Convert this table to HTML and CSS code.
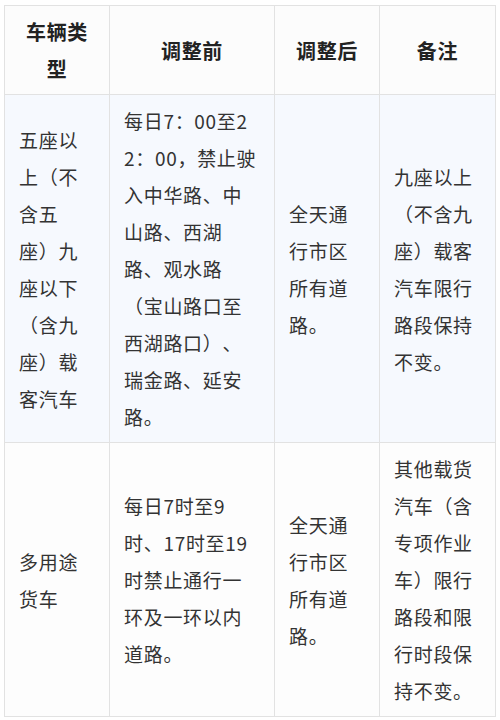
FILE: index.html
```html
<!DOCTYPE html>
<html lang="zh">
<head>
<meta charset="utf-8">
<link rel="stylesheet" href="styles.css">
</head>
<body>
<table class="rules">
  <colgroup>
    <col class="c1"><col class="c2"><col class="c3"><col class="c4">
  </colgroup>
  <thead>
    <tr class="head">
      <th>车辆类型</th>
      <th>调整前</th>
      <th>调整后</th>
      <th>备注</th>
    </tr>
  </thead>
  <tbody>
    <tr class="row-a">
      <td>五座以上（不含五座）九座以下（含九座）载客汽车</td>
      <td>每日7：00至22：00，禁止驶入中华路、中山路、西湖路、观水路（宝山路口至西湖路口）、瑞金路、延安路。</td>
      <td>全天通行市区所有道路。</td>
      <td>九座以上（不含九座）载客汽车限行路段保持不变。</td>
    </tr>
    <tr class="row-b">
      <td>多用途货车</td>
      <td>每日7时至9时、17时至19时禁止通行一环及一环以内道路。</td>
      <td>全天通行市区所有道路。</td>
      <td>其他载货汽车（含专项作业车）限行路段和限行时段保持不变。</td>
    </tr>
  </tbody>
</table>
</body>
</html>
```
FILE: styles.css
```css
html, body {
  margin: 0;
  padding: 0;
  background: #ffffff;
}
.rules {
  margin: 5px 0 0 4px;
  border-collapse: collapse;
  table-layout: fixed;
  width: 491px;
  font-family: "Noto Sans CJK SC", "Noto Sans", sans-serif;
  font-size: 19px;
  letter-spacing: 0.7px;
  line-height: 37px;
  color: #333333;
  text-spacing-trim: space-all;
  font-feature-settings: "fwid" 0;
}
.c1 { width: 105px; }
.c2 { width: 165px; }
.c3 { width: 105px; }
.c4 { width: 116px; }
.rules th,
.rules td {
  border: 1px solid #e2e2e2;
  padding: 7px 14px 7px 14px;
  vertical-align: middle;
  word-break: break-all;
}
.rules th {
  font-weight: bold;
  font-size: 20px;
  text-align: center;
  color: #222222;
  background: #fcfcfc;
}
.rules td {
  text-align: left;
}
.row-a td {
  background: #f6f9fe;
}
.row-b td {
  background: #fdfdfd;
}
```
